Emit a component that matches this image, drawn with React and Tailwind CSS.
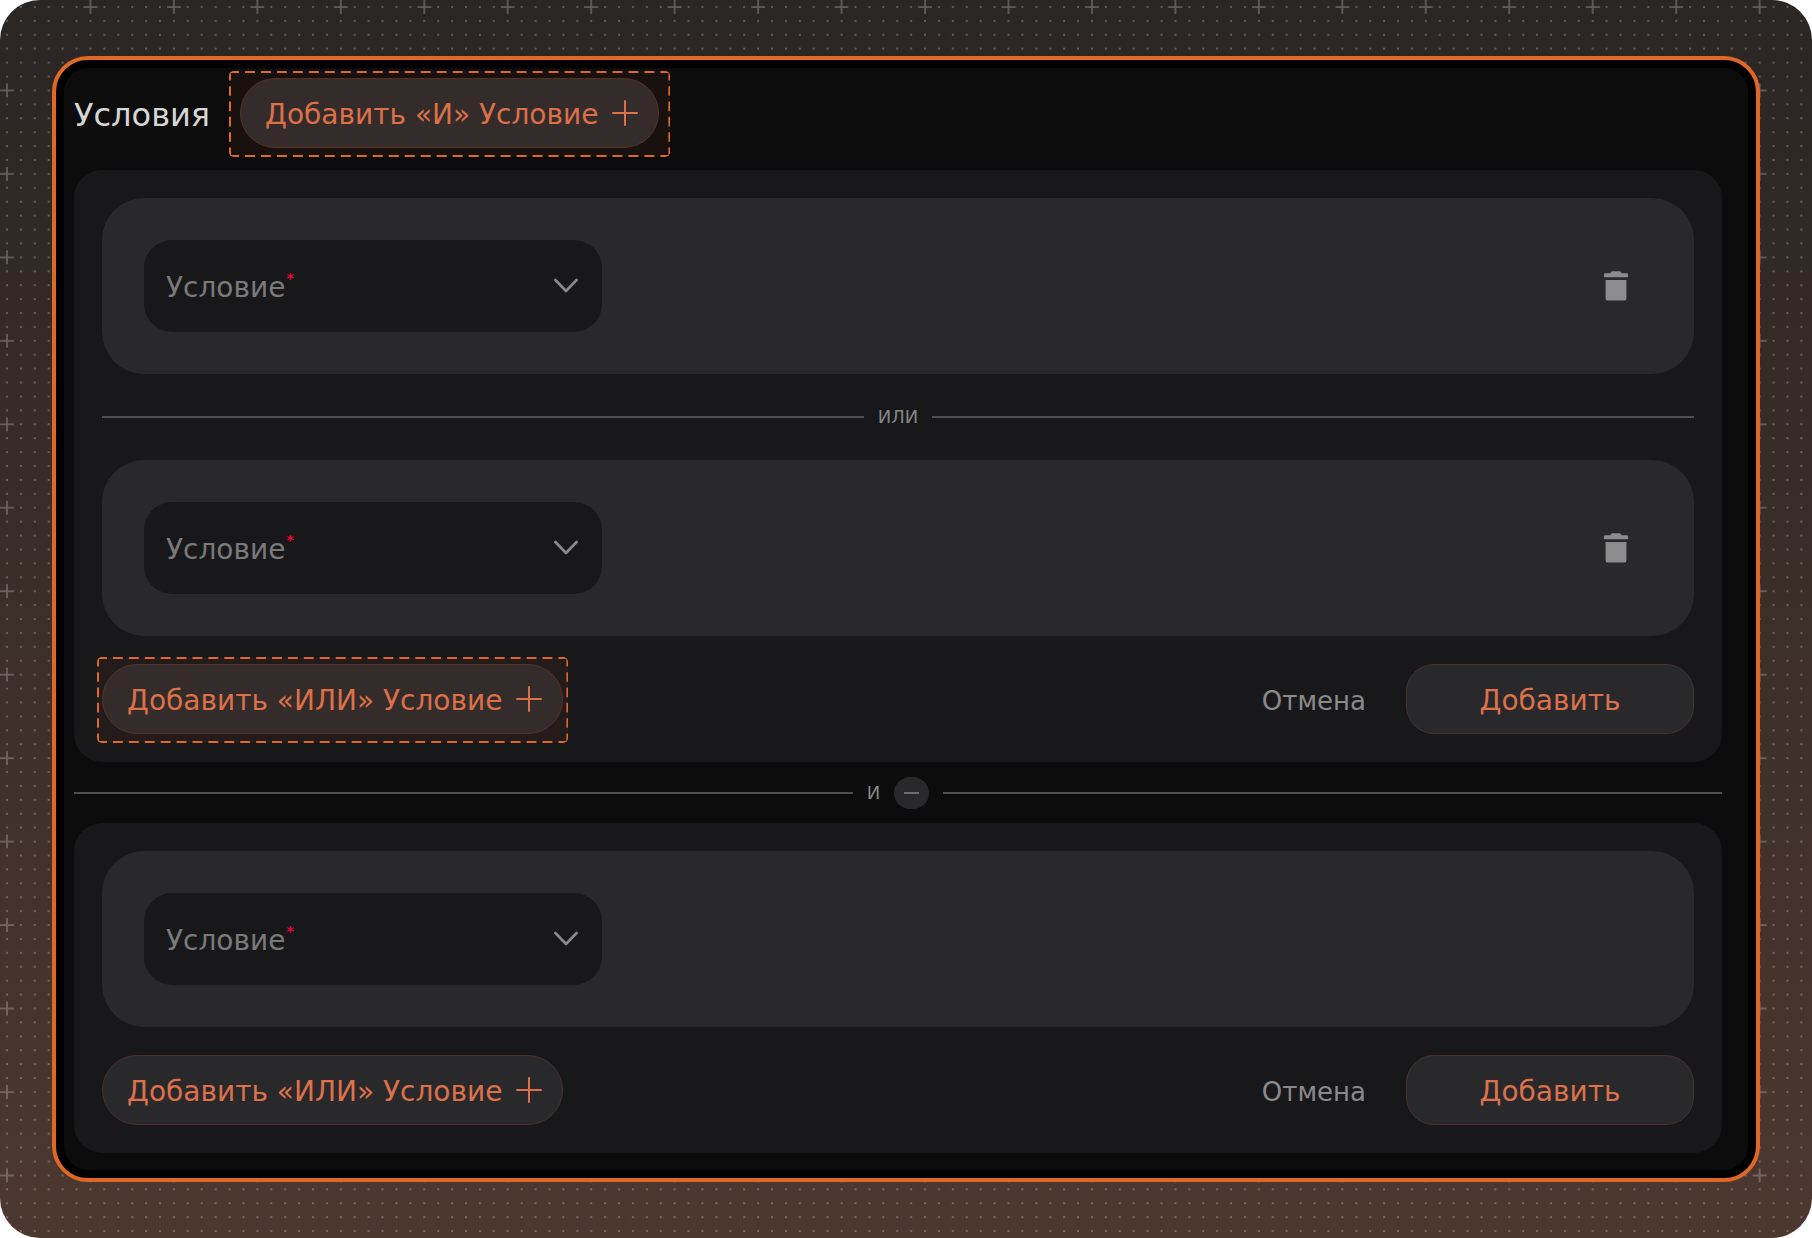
import clsx from 'clsx'

// Dotted canvas with a cross at every sixth dot
function Backdrop() {
  const dots = []
  for (let row = 0; row < 6; row++) {
    for (let col = 0; col < 6; col++) {
      if (row || col) dots.push([col, row])
    }
  }

  return (
    <svg className="absolute inset-0 size-full" aria-hidden="true">
      <defs>
        <pattern id="grid" x="-1" y="-1" width="83.46" height="83.46" patternUnits="userSpaceOnUse">
          {dots.map(([col, row]) => (
            <rect
              key={`${col}-${row}`}
              x={7 + col * 13.91}
              y={7 + row * 13.91}
              width="2"
              height="2"
              fill="#fff"
              fillOpacity="0.25"
            />
          ))}
          <path d="M8 1v14M1 8h14" stroke="#fff" strokeOpacity="0.25" strokeWidth="1.8" />
        </pattern>
      </defs>
      <rect width="100%" height="100%" fill="url(#grid)" />
    </svg>
  )
}

function PlusIcon() {
  return (
    <svg className="size-[26px] shrink-0" viewBox="0 0 26 26" fill="none" stroke="currentColor" strokeWidth="2" strokeLinecap="round" aria-hidden="true">
      <path d="M13 1v24M1 13h24" />
    </svg>
  )
}

function TrashIcon() {
  return (
    <svg className="h-[30px] w-6" viewBox="0 0 24 30" fill="currentColor" aria-hidden="true">
      <path d="M8.5 0.3h7c1.2 0 1.8 2 3.2 2h4.3q1 0 1 1v3H0v-3q0-1 1-1h4.3c1.4 0 2-2 3.2-2z" />
      <path d="M1.6 9h20.8v18.4a2.2 2.2 0 0 1-2.2 2.2H3.8a2.2 2.2 0 0 1-2.2-2.2z" />
    </svg>
  )
}

// Dashed outline around a highlighted control; dashes always meet in the corners
function Highlight({ steps, className }) {
  const side = { stroke: '#e06826', strokeWidth: 4, strokeDasharray: '10 6' }
  const across = steps * 16 + 10

  return (
    <svg className={clsx('pointer-events-none absolute rounded-[5px] bg-[#e06826]/6', className)} aria-hidden="true">
      <line x1="0" y1="0" x2="100%" y2="0" pathLength={across} {...side} />
      <line x1="0" y1="100%" x2="100%" y2="100%" pathLength={across} {...side} />
      <line x1="0" y1="0" x2="0" y2="100%" pathLength="90" {...side} />
      <line x1="100%" y1="0" x2="100%" y2="100%" pathLength="90" {...side} />
    </svg>
  )
}

function AddConditionButton({ children, highlight }) {
  return (
    <div className="relative">
      <button
        type="button"
        className="flex h-[70px] items-center gap-[14px] rounded-full border border-[#4d302c] bg-[#29292b] pr-5 pl-6 text-[28px] text-[#dc714c]"
      >
        <span className="pt-1">{children}</span>
        <PlusIcon />
      </button>
      {highlight}
    </div>
  )
}

function ConditionCard({ id, removable }) {
  return (
    <div className="flex items-center justify-between rounded-[42px] bg-[#29292b] p-[42px]">
      <div className="relative w-[458px]">
        <select
          id={id}
          required
          defaultValue=""
          className="block h-[92px] w-full appearance-none rounded-[28px] bg-[#18181a] px-6 text-[28px] text-[#808080] outline-none"
        >
          <option value="" hidden></option>
        </select>
        <label
          htmlFor={id}
          className="pointer-events-none absolute inset-y-0 left-[22px] flex items-center pt-1 text-[28px] text-[#7a7a7a]"
        >
          Условие
          <span className="pb-5 pl-px text-sm leading-none font-bold text-[#ee0038]">*</span>
        </label>
        <svg className="pointer-events-none absolute top-[38px] right-6 h-4 w-6" viewBox="0 0 24 16" fill="none" stroke="#8a8a8a" strokeWidth="2.6" strokeLinecap="round" strokeLinejoin="round" aria-hidden="true">
          <path d="M1.4 2L12 13L22.6 2" />
        </svg>
      </div>
      {removable && (
        <button type="button" aria-label="Удалить" className="mr-6 text-[#8c8c8c]">
          <TrashIcon />
        </button>
      )}
    </div>
  )
}

function Divider({ children, className }) {
  return (
    <div className={clsx('flex items-center gap-[14px] text-lg text-[#858585]', className)}>
      <span className="h-[2px] flex-1 bg-[#4f4f50]" />
      {children}
      <span className="h-[2px] flex-1 bg-[#4f4f50]" />
    </div>
  )
}

function GroupFooter({ highlight }) {
  return (
    <div className="mt-7 flex items-center justify-between">
      <AddConditionButton highlight={highlight}>Добавить «ИЛИ» Условие</AddConditionButton>
      <div className="flex items-center gap-10">
        <button type="button" className="pt-1 text-[26px] text-[#8a8a8a]">Отмена</button>
        <button
          type="button"
          className="h-[70px] w-72 rounded-[28px] border border-[#4d302c] bg-[#29292b] pt-1 text-[28px] text-[#dc714c]"
        >
          Добавить
        </button>
      </div>
    </div>
  )
}

export default function App() {
  return (
    <div className="relative overflow-hidden rounded-[40px] bg-linear-to-b from-[#2a2624] via-[#3c2e29] to-[#4c382f] px-[52px] py-14 font-['DejaVu_Sans',sans-serif]">
      <Backdrop />

      <main className="relative rounded-[36px] border-4 border-[#e06826] bg-black p-2">
        <div className="rounded-[24px] bg-[#0c0c0c] pt-[10px] pr-[26px] pb-[17px] pl-[10px]">

          {/* Header */}
          <div className="mb-[22px] flex items-center gap-[30px]">
            <h1 className="pt-1 text-[32px] text-[#d6d6d6]">Условия</h1>
            <AddConditionButton highlight={<Highlight steps={27} className="-top-[7px] -left-[11px] h-[86px] w-[calc(100%+22px)]" />}>
              Добавить «И» Условие
            </AddConditionButton>
          </div>

          {/* First group */}
          <section className="rounded-[28px] bg-[#18181a] p-7">
            <ConditionCard id="condition-1" removable />
            <Divider className="h-[86px]">ИЛИ</Divider>
            <ConditionCard id="condition-2" removable />
            <GroupFooter highlight={<Highlight steps={29} className="-top-[7px] -left-[5px] h-[86px] w-[calc(100%+10px)]" />} />
          </section>

          <Divider className="h-[61px]">
            И
            <button
              type="button"
              aria-label="Убрать группу"
              className="flex h-8 w-[35px] items-center justify-center rounded-full bg-[#29292b]"
            >
              <svg className="h-[2px] w-[15px]" viewBox="0 0 15 2" aria-hidden="true">
                <path d="M0 1h15" stroke="currentColor" strokeWidth="1.5" />
              </svg>
            </button>
          </Divider>

          {/* Second group */}
          <section className="rounded-[28px] bg-[#18181a] p-7">
            <ConditionCard id="condition-3" />
            <GroupFooter />
          </section>
        </div>
      </main>
    </div>
  )
}
